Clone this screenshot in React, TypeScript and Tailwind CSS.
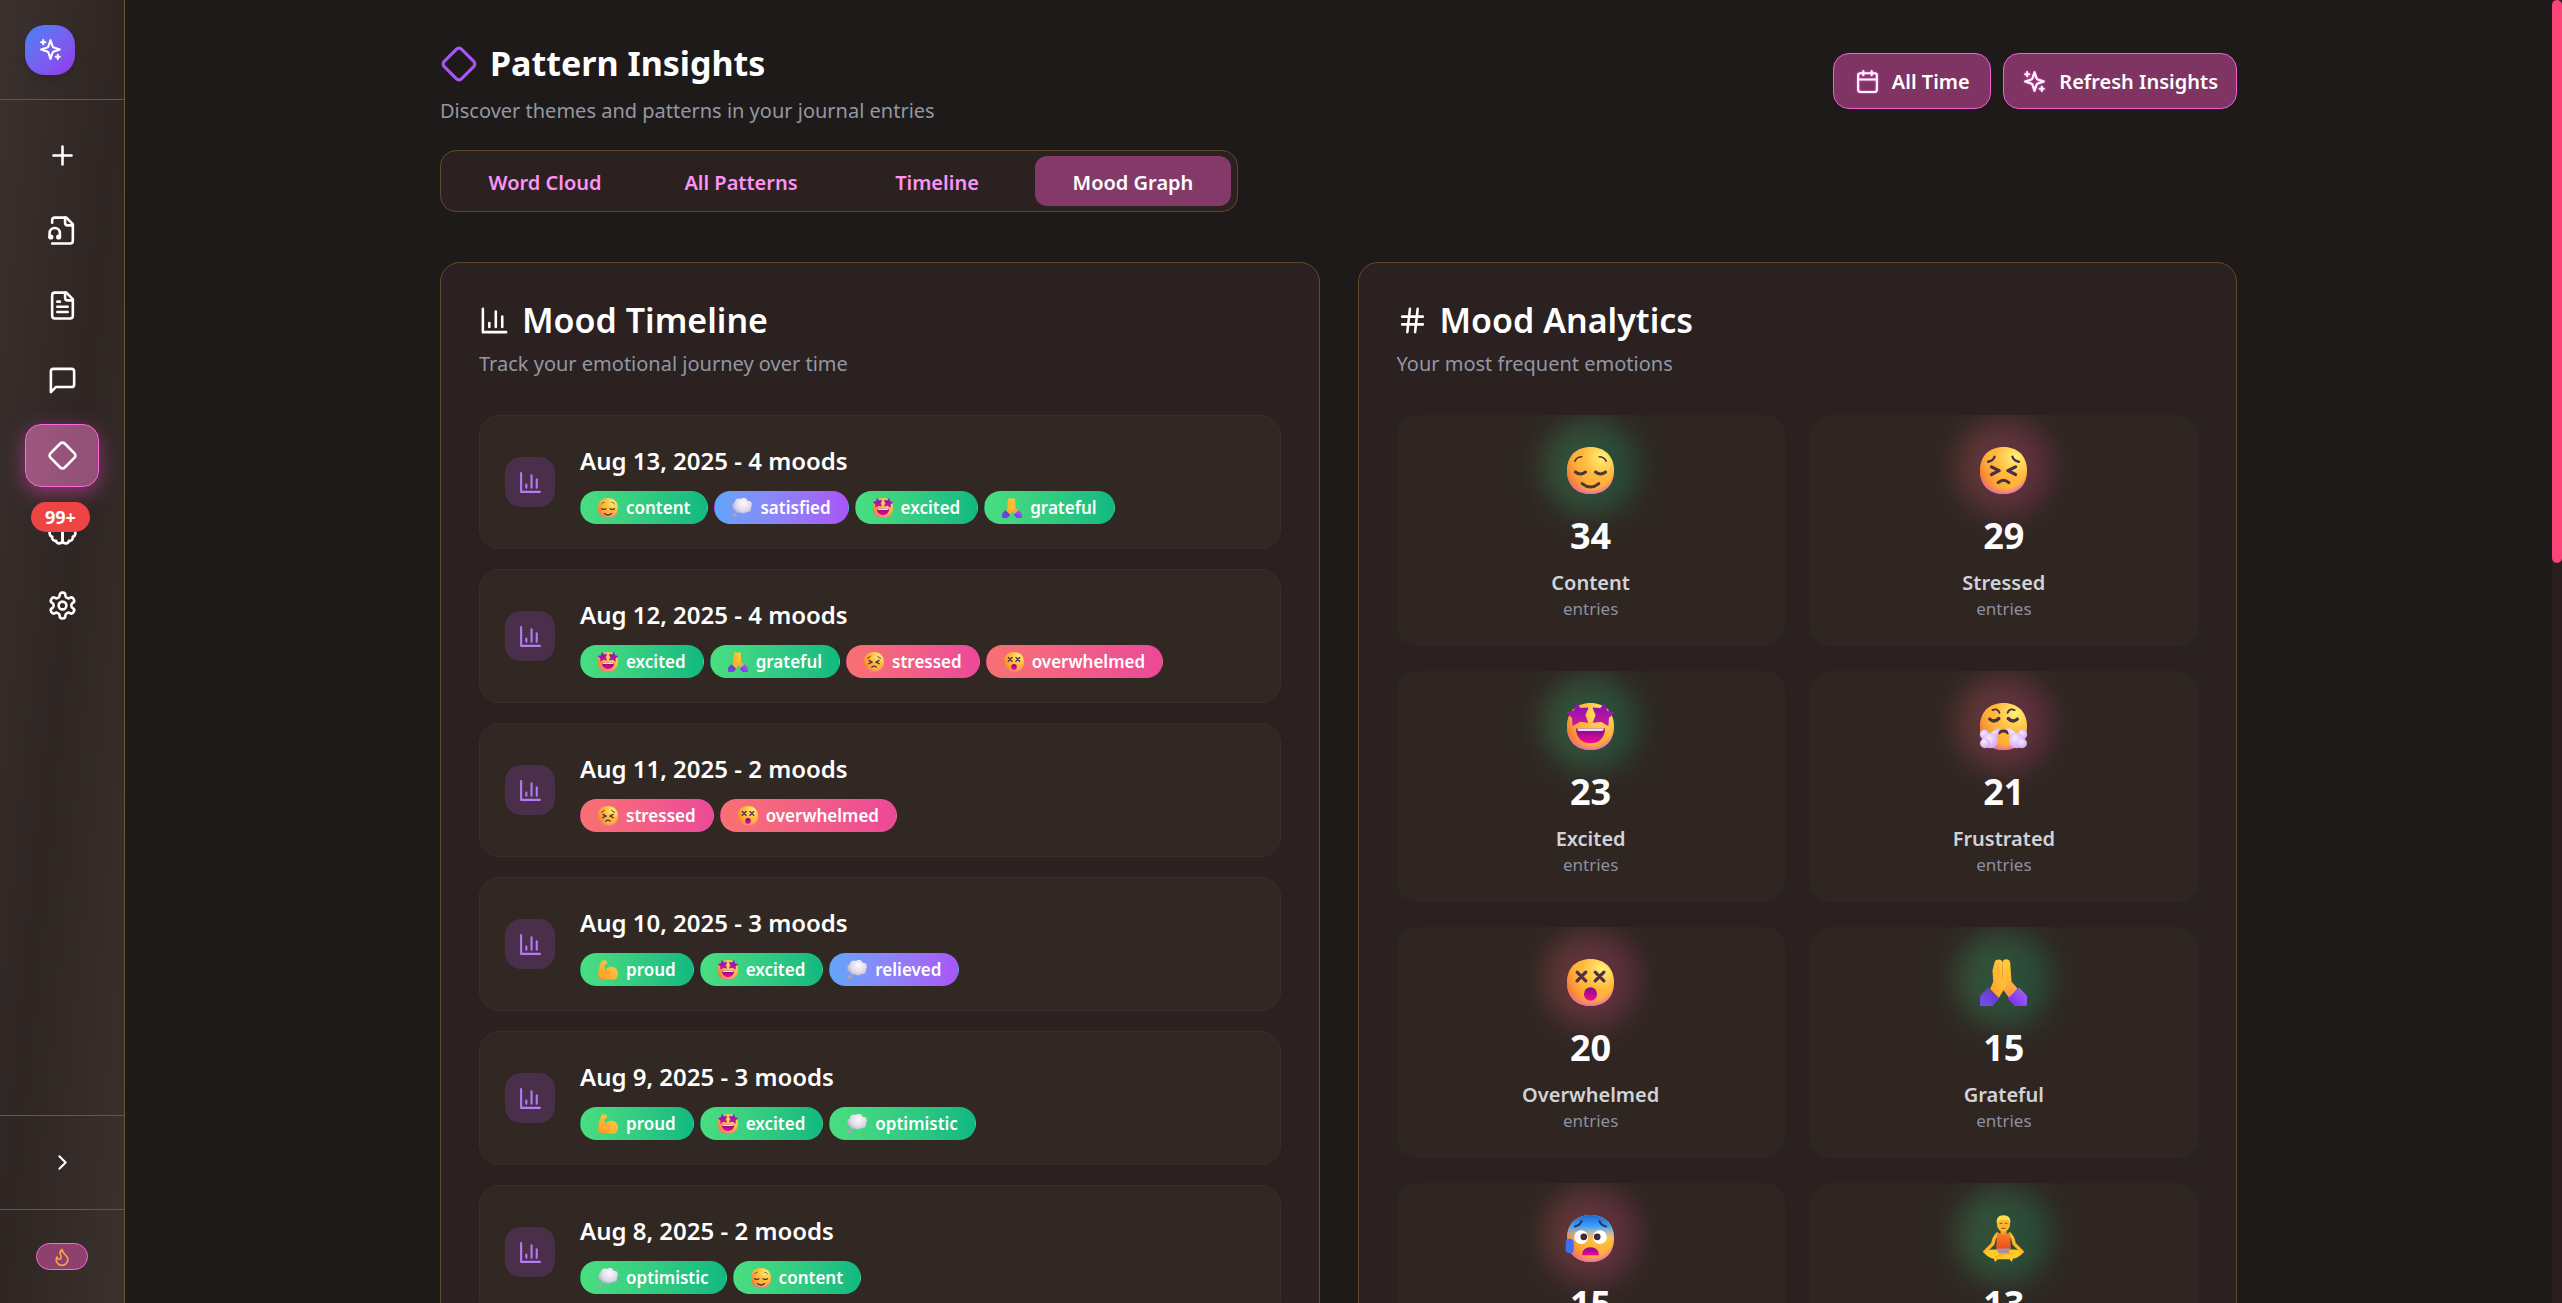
import type { ReactNode } from "react";

type EmojiName =
  | "relieved"
  | "persevering"
  | "starStruck"
  | "steam"
  | "dizzy"
  | "pray"
  | "anxious"
  | "lotus"
  | "biceps"
  | "thought";

type Tone = "green" | "blue" | "red";

const PILL_TONE: Record<Tone, string> = {
  green: "from-[#4ade80] to-[#10b981]",
  blue: "from-[#60a5fa] to-[#a855f7]",
  red: "from-[#f87171] to-[#ec4899]",
};

const MOODS: Record<string, { emoji: EmojiName; tone: Tone }> = {
  content: { emoji: "relieved", tone: "green" },
  satisfied: { emoji: "thought", tone: "blue" },
  excited: { emoji: "starStruck", tone: "green" },
  grateful: { emoji: "pray", tone: "green" },
  stressed: { emoji: "persevering", tone: "red" },
  overwhelmed: { emoji: "dizzy", tone: "red" },
  proud: { emoji: "biceps", tone: "green" },
  relieved: { emoji: "thought", tone: "blue" },
  optimistic: { emoji: "thought", tone: "green" },
};

const DAYS: { date: string; moods: string[] }[] = [
  { date: "Aug 13, 2025", moods: ["content", "satisfied", "excited", "grateful"] },
  { date: "Aug 12, 2025", moods: ["excited", "grateful", "stressed", "overwhelmed"] },
  { date: "Aug 11, 2025", moods: ["stressed", "overwhelmed"] },
  { date: "Aug 10, 2025", moods: ["proud", "excited", "relieved"] },
  { date: "Aug 9, 2025", moods: ["proud", "excited", "optimistic"] },
  { date: "Aug 8, 2025", moods: ["optimistic", "content"] },
];

const STATS: { label: string; count: number; emoji: EmojiName; tone: Tone }[] = [
  { label: "Content", count: 34, emoji: "relieved", tone: "green" },
  { label: "Stressed", count: 29, emoji: "persevering", tone: "red" },
  { label: "Excited", count: 23, emoji: "starStruck", tone: "green" },
  { label: "Frustrated", count: 21, emoji: "steam", tone: "red" },
  { label: "Overwhelmed", count: 20, emoji: "dizzy", tone: "red" },
  { label: "Grateful", count: 15, emoji: "pray", tone: "green" },
  { label: "Anxious", count: 15, emoji: "anxious", tone: "red" },
  { label: "Calm", count: 13, emoji: "lotus", tone: "green" },
];

/* ---------- line icons ---------- */

function Icon({ className, strokeWidth = 2, children }: { className: string; strokeWidth?: number; children: ReactNode }) {
  return (
    <svg
      viewBox="0 0 24 24"
      className={className}
      fill="none"
      stroke="currentColor"
      strokeWidth={strokeWidth}
      strokeLinecap="round"
      strokeLinejoin="round"
      aria-hidden="true"
    >
      {children}
    </svg>
  );
}

const sparkles = (
  <>
    <path d="m12 3-1.912 5.813a2 2 0 0 1-1.275 1.275L3 12l5.813 1.912a2 2 0 0 1 1.275 1.275L12 21l1.912-5.813a2 2 0 0 1 1.275-1.275L21 12l-5.813-1.912a2 2 0 0 1-1.275-1.275L12 3Z" />
    <path d="M5 3v4M19 17v4M3 5h4M17 19h4" />
  </>
);
const diamond = (
  <path d="M2.7 10.3a2.41 2.41 0 0 0 0 3.41l7.59 7.59a2.41 2.41 0 0 0 3.41 0l7.59-7.59a2.41 2.41 0 0 0 0-3.41l-7.59-7.59a2.41 2.41 0 0 0-3.41 0Z" />
);
const chart = <path d="M3 3v18h18M18 17V9M13 17V5M8 17v-3" />;
const hash = <path d="M4 9h16M4 15h16M10 3 8 21M16 3l-2 18" />;
const calendar = (
  <>
    <path d="M8 2v4M16 2v4M3 10h18" />
    <rect x="3" y="4" width="18" height="18" rx="2" />
  </>
);
const plus = <path d="M5 12h14M12 5v14" />;
const fileHeadphones = (
  <>
    <path d="M4 22h14a2 2 0 0 0 2-2V7l-5-5H6a2 2 0 0 0-2 2v2" />
    <path d="M14 2v4a2 2 0 0 0 2 2h4" />
    <path d="M2 17v-3a4 4 0 0 1 8 0v3" />
    <circle cx="9" cy="17" r="1" />
    <circle cx="3" cy="17" r="1" />
  </>
);
const fileText = (
  <>
    <path d="M15 2H6a2 2 0 0 0-2 2v16a2 2 0 0 0 2 2h12a2 2 0 0 0 2-2V7Z" />
    <path d="M14 2v4a2 2 0 0 0 2 2h4M10 9H8M16 13H8M16 17H8" />
  </>
);
const message = <path d="M21 15a2 2 0 0 1-2 2H7l-4 4V5a2 2 0 0 1 2-2h14a2 2 0 0 1 2 2z" />;
const brain = (
  <>
    <path d="M9.5 2A2.5 2.5 0 0 1 12 4.5v15a2.5 2.5 0 0 1-4.96.44 2.5 2.5 0 0 1-2.96-3.08 3 3 0 0 1-.34-5.58 2.5 2.5 0 0 1 1.32-4.24 2.5 2.5 0 0 1 1.98-3A2.5 2.5 0 0 1 9.5 2Z" />
    <path d="M14.5 2A2.5 2.5 0 0 0 12 4.5v15a2.5 2.5 0 0 0 4.96.44 2.5 2.5 0 0 0 2.96-3.08 3 3 0 0 0 .34-5.58 2.5 2.5 0 0 0-1.32-4.24 2.5 2.5 0 0 0-1.98-3A2.5 2.5 0 0 0 14.5 2Z" />
  </>
);
const settings = (
  <>
    <path d="M12.22 2h-.44a2 2 0 0 0-2 2v.18a2 2 0 0 1-1 1.73l-.43.25a2 2 0 0 1-2 0l-.15-.08a2 2 0 0 0-2.73.73l-.22.38a2 2 0 0 0 .73 2.73l.15.1a2 2 0 0 1 1 1.72v.51a2 2 0 0 1-1 1.74l-.15.09a2 2 0 0 0-.73 2.73l.22.38a2 2 0 0 0 2.73.73l.15-.08a2 2 0 0 1 2 0l.43.25a2 2 0 0 1 1 1.73V20a2 2 0 0 0 2 2h.44a2 2 0 0 0 2-2v-.18a2 2 0 0 1 1-1.73l.43-.25a2 2 0 0 1 2 0l.15.08a2 2 0 0 0 2.73-.73l.22-.39a2 2 0 0 0-.73-2.73l-.15-.08a2 2 0 0 1-1-1.74v-.5a2 2 0 0 1 1-1.74l.15-.09a2 2 0 0 0 .73-2.73l-.22-.38a2 2 0 0 0-2.73-.73l-.15.08a2 2 0 0 1-2 0l-.43-.25a2 2 0 0 1-1-1.73V4a2 2 0 0 0-2-2z" />
    <circle cx="12" cy="12" r="3" />
  </>
);
const chevron = <path d="m9 18 6-6-6-6" />;
const flame = (
  <path d="M8.5 14.5A2.5 2.5 0 0 0 11 12c0-1.38-.5-2-1-3-1.072-2.143-.224-4.054 2-6 .5 2.5 2 4.9 4 6.5 2 1.6 3 3.5 3 5.5a7 7 0 1 1-14 0c0-1.153.433-2.294 1-3a2.5 2.5 0 0 0 2.5 2.5z" />
);

/* ---------- emoji ---------- */

function EmojiPaints() {
  return (
    <svg className="absolute h-0 w-0" aria-hidden="true">
      <defs>
        <radialGradient id="skin" gradientUnits="userSpaceOnUse" cx="23" cy="8" r="24">
          <stop offset="0" stopColor="#fff176" />
          <stop offset=".5" stopColor="#ffb83c" />
          <stop offset="1" stopColor="#ffab30" />
        </radialGradient>
        <linearGradient id="skinLeft" gradientUnits="userSpaceOnUse" x1="2" y1="22" x2="12" y2="17">
          <stop offset="0" stopColor="#f0653c" stopOpacity=".9" />
          <stop offset="1" stopColor="#f59639" stopOpacity="0" />
        </linearGradient>
        <radialGradient id="skinBase" gradientUnits="userSpaceOnUse" cx="16" cy="12" r="18">
          <stop offset=".82" stopColor="#f06fb4" stopOpacity="0" />
          <stop offset="1" stopColor="#e864c4" stopOpacity=".9" />
        </radialGradient>
        <linearGradient id="star" x1="0" y1="0" x2="0" y2="1">
          <stop offset="0" stopColor="#8510b4" />
          <stop offset="1" stopColor="#cc1a9c" />
        </linearGradient>
        <linearGradient id="mouth" x1="0" y1="0" x2="0" y2="1">
          <stop offset="0" stopColor="#820c8c" />
          <stop offset="1" stopColor="#f4079b" />
        </linearGradient>
        <linearGradient id="chill" gradientUnits="userSpaceOnUse" x1="0" y1="2" x2="0" y2="17">
          <stop offset="0" stopColor="#1f68cf" />
          <stop offset=".45" stopColor="#3ba2ff" />
          <stop offset="1" stopColor="#c9a8d8" stopOpacity="0" />
        </linearGradient>
        <radialGradient id="puff" cx=".4" cy=".35" r=".75">
          <stop offset="0" stopColor="#f4eaff" />
          <stop offset="1" stopColor="#cf9ef2" />
        </radialGradient>
        <radialGradient id="cloud" gradientUnits="userSpaceOnUse" cx="18" cy="9" r="18">
          <stop offset="0" stopColor="#fbfafd" />
          <stop offset=".6" stopColor="#dedae8" />
          <stop offset="1" stopColor="#aaa2bd" />
        </radialGradient>
        <linearGradient id="hand" x1="0" y1="1" x2="1" y2="0">
          <stop offset="0" stopColor="#ff9a1f" />
          <stop offset="1" stopColor="#ffd24a" />
        </linearGradient>
        <linearGradient id="hand2" x1="0" y1="1" x2="0" y2="0">
          <stop offset="0" stopColor="#ff8a5c" />
          <stop offset=".4" stopColor="#ffb52e" />
          <stop offset="1" stopColor="#ffcb3a" />
        </linearGradient>
        <linearGradient id="sleeve" x1="0" y1="1" x2="1" y2="0">
          <stop offset="0" stopColor="#6f52f0" />
          <stop offset="1" stopColor="#6b2fc0" />
        </linearGradient>
        <linearGradient id="sleeve2" x1="0" y1="1" x2="1" y2="0">
          <stop offset="0" stopColor="#7a22f0" />
          <stop offset="1" stopColor="#a56cf5" />
        </linearGradient>
        <linearGradient id="shirt" x1="0" y1="0" x2="0" y2="1">
          <stop offset="0" stopColor="#ff7f2a" />
          <stop offset="1" stopColor="#e94e1b" />
        </linearGradient>
      </defs>
    </svg>
  );
}

const FACE = "M16 2C24.6 2 30 7.4 30 16S24.6 30 16 30 2 24.6 2 16 7.4 2 16 2Z";

function Face() {
  return (
    <>
      <path d={FACE} fill="url(#skin)" />
      <path d={FACE} fill="url(#skinLeft)" />
      <path d={FACE} fill="url(#skinBase)" />
    </>
  );
}

const EMOJI: Record<EmojiName, ReactNode> = {
  relieved: (
    <>
      <Face />
      <g fill="none" stroke="#4a3538" strokeLinecap="round">
        <path d="M6.7 10.4Q7.8 7.8 10.8 7.8M25.3 10.4Q24.2 7.8 21.2 7.8" strokeWidth="1" />
        <path d="M7 16.9Q10 19.2 13 16.9M19 16.9Q22 19.2 25 16.9" strokeWidth="1.8" />
        <path d="M11 23.8Q16 27.8 21 23.8" strokeWidth="1.8" />
      </g>
    </>
  ),
  persevering: (
    <>
      <Face />
      <g fill="none" stroke="#4a2f45" strokeLinecap="round" strokeLinejoin="round">
        <path d="M10.7 7.8Q9.8 10.4 6.8 10.8M21.3 7.8Q22.2 10.4 25.2 10.8" strokeWidth="1.4" />
        <path d="M8.8 13.8 13.4 16.1 8.8 18.4M23.2 13.8 18.6 16.1 23.2 18.4" strokeWidth="1.9" />
        <path d="M12.8 23.2Q16 20.4 19.2 23.2" strokeWidth="1.8" />
      </g>
    </>
  ),
  starStruck: (
    <>
      <Face />
      <path
        d="M7.6 2.6 10 5.4 14.4 5 12.6 9.2 14.2 13.4 9.6 12.8 5.6 15.2 5.4 10.9 2.4 8 6.4 6.6ZM24.4 2.6 22 5.4 17.6 5 19.4 9.2 17.8 13.4 22.4 12.8 26.4 15.2 26.6 10.9 29.6 8 25.6 6.6Z"
        fill="url(#star)"
        stroke="url(#star)"
        strokeWidth=".7"
        strokeLinejoin="round"
      />
      <path d="M7.4 17.2h17.2c0 5.2-3.2 8.8-8.6 8.8s-8.6-3.6-8.6-8.8z" fill="url(#mouth)" />
      <path d="M8.2 17.2h15.6v.5q0 1-1 1H9.2q-1 0-1-1z" fill="#eadcf6" />
    </>
  ),
  steam: (
    <>
      <Face />
      <g fill="none" stroke="#4a3038" strokeLinecap="round">
        <path d="M9.4 6.2Q12.6 4.9 13.6 7.9M22.6 6.2Q19.4 4.9 18.4 7.9" strokeWidth="1.1" />
        <path d="M7.8 11.6Q10.4 14 13.2 11.2M24.2 11.6Q21.6 14 18.8 11.2" strokeWidth="2" />
        <path d="M13.4 19.8Q16 17.6 18.6 19.8" strokeWidth="1.8" />
      </g>
      <g fill="url(#puff)">
        <path d="M13.6 16.2 14.1 17.4 11.6 23.4 6.6 21.2Z" />
        <path d="M18.4 16.2 17.9 17.4 20.4 23.4 25.4 21.2Z" />
        <circle cx="4.7" cy="20.8" r="2.8" />
        <circle cx="27.3" cy="20.8" r="2.8" />
        <circle cx="8.2" cy="24.4" r="4.6" />
        <circle cx="23.8" cy="24.4" r="4.6" />
        <circle cx="5" cy="26" r="3" />
        <circle cx="27" cy="26" r="3" />
      </g>
    </>
  ),
  dizzy: (
    <>
      <Face />
      <path
        d="M8 9.8 13.2 15M13.2 9.8 8 15M18.8 9.8 24 15M24 9.8 18.8 15"
        fill="none"
        stroke="#4d2f4e"
        strokeWidth="1.9"
        strokeLinecap="round"
      />
      <ellipse cx="16" cy="22.9" rx="3.9" ry="4" fill="url(#mouth)" />
    </>
  ),
  pray: (
    <>
      <path d="M15.4 4Q15.6 2.2 17.6 2.2T20 4.2L20.8 15.6 24.4 19.6 19.4 25.2 16 20.6Z" fill="url(#hand2)" />
      <path d="M10.6 4.2Q10.8 2.4 12.6 2.4 15 2 15.6 4.4L17.6 5.2V18L13.2 25.2 8 19.8 9.9 15.6 9.4 9Z" fill="url(#hand)" />
      <path d="M12.8 4v8M15.4 4.6v9" stroke="#f09a28" strokeWidth=".5" fill="none" />
      <path d="M6.6 19.2 13.4 25.6 9.4 30H2v-6Z" fill="url(#sleeve)" />
      <path d="M25.4 19.2 18.6 25.6 22.6 30H30v-6Z" fill="url(#sleeve2)" />
    </>
  ),
  anxious: (
    <>
      <Face />
      <path d={FACE} fill="url(#chill)" />
      <path
        d="M10.6 5.6Q9.8 8.2 6.8 8.8M21.4 5.6Q22.2 8.2 25.2 8.8"
        fill="none"
        stroke="#2f3557"
        strokeWidth="1.3"
        strokeLinecap="round"
      />
      <circle cx="10.4" cy="15.2" r="4.1" fill="#fff" />
      <circle cx="21.6" cy="15.2" r="4.1" fill="#fff" />
      <circle cx="12" cy="15" r="2" fill="#43283c" />
      <circle cx="20" cy="15" r="2" fill="#43283c" />
      <path d="M11 26c0-3.200 2-4.800 5-4.800s5 1.600 5 4.800z" fill="url(#mouth)" />
      <rect x="1.200" y="16.200" width="4.800" height="8.600" rx="2.400" fill="#3f6ef6" />
    </>
  ),
  lotus: (
    <>
      <path d="M3.600 23.600 9 22.600H23L28.400 23.600Q25.500 27.600 21.600 28L21 30 19.500 28.400H12.500L11 30 10.200 28Q6.500 27.600 3.600 23.600Z" fill="#ffc928" />
      <path d="M12.200 13.400Q10.200 15.500 9.600 19.200L5 23.800M19.800 13.400Q21.800 15.500 22.400 19.200L27 23.800" fill="none" stroke="#fdb62c" strokeWidth="2" strokeLinecap="round" />
      <rect x="14.200" y="10" width="3.600" height="4" fill="#f2a024" />
      <path d="M12.200 12.200Q16 15 19.800 12.200L20.400 22.600H11.600Z" fill="url(#shirt)" />
      <path d="M11.800 22h8.400l-1.400 3h-5.600z" fill="#a394a6" />
      <path d="M11 27.400Q16 24.400 21 25.200" stroke="#f7a91d" strokeWidth=".7" fill="none" />
      <ellipse cx="16" cy="7.300" rx="3.900" ry="4.800" fill="#fdb92e" />
      <path d="M12 7Q11.400 2.200 16 2.200T20 7L18.600 4.800 13.600 5Z" fill="#ffe04a" />
      <path d="M14 7h1M17 7h1M15 10h2" stroke="#a2582a" strokeWidth=".7" strokeLinecap="round" />
    </>
  ),
  biceps: (
    <>
      <path
        d="M6.500 4.500Q8 2 11.500 2.400L14 3.600Q15.400 6 13.400 8.200L11.200 9Q10.600 13 12.600 16.500 15 11.400 20.600 11.600 29 12.400 30 20.500 30 28.500 24 29.600 14 30.800 6 29.200 1.600 28 2.200 21.500 2.800 11.500 6.500 4.500Z"
        fill="url(#hand)"
      />
      <path d="M12.600 16.500Q13.600 19.500 17 20" stroke="#f08a2c" strokeWidth="1.200" fill="none" strokeLinecap="round" />
      <path d="M3 25Q8 30 24 29.600 14 30.800 6 29.200 3 28 3 25Z" fill="#f5814d" />
    </>
  ),
  thought: (
    <g fill="url(#cloud)">
      <circle cx="8" cy="13.500" r="5.600" />
      <circle cx="11.500" cy="8" r="5.400" />
      <circle cx="18.500" cy="7" r="5.200" />
      <circle cx="24.600" cy="11" r="5.200" />
      <circle cx="24" cy="17" r="4.800" />
      <circle cx="17.500" cy="18.500" r="5.200" />
      <circle cx="11" cy="18" r="4.600" />
      <circle cx="16" cy="13" r="6.500" />
      <circle cx="5.500" cy="26" r="2.800" />
    </g>
  ),
};

function Emoji({ name, className }: { name: EmojiName; className: string }) {
  return (
    <svg viewBox="2 2 28 28" className={className} aria-hidden="true">
      {EMOJI[name]}
    </svg>
  );
}

/* ---------- sidebar ---------- */

function NavButton({ label, children, badge }: { label: string; children: ReactNode; badge?: string }) {
  return (
    <button type="button" aria-label={label} className="relative flex h-[63px] items-center justify-center rounded-2xl">
      <Icon className="size-[31px]">{children}</Icon>
      {badge && (
        <span className="absolute top-[3px] left-1.5 rounded-full bg-[#ef4444] px-3.5 text-[18px] leading-[30px] font-bold">
          {badge}
        </span>
      )}
    </button>
  );
}

function Sidebar() {
  return (
    <aside className="flex w-[125px] shrink-0 flex-col border-r border-[#6f5733] bg-linear-to-br from-[#3b3230] via-[#2f2624] to-[#3b322e] text-white">
      <div className="flex h-[100px] items-center border-b border-[#6f5733] pl-[25px]">
        <div className="flex size-[50px] items-center justify-center rounded-[20px] bg-linear-to-br from-[#3b82f6] to-[#9333ea] shadow-lg">
          <Icon className="size-[25px]">{sparkles}</Icon>
        </div>
      </div>
      <nav className="flex grow flex-col gap-3 px-[25px] pt-6">
        <NavButton label="New entry">{plus}</NavButton>
        <NavButton label="Voice notes">{fileHeadphones}</NavButton>
        <NavButton label="Entries">{fileText}</NavButton>
        <NavButton label="Chat">{message}</NavButton>
        <button
          type="button"
          aria-label="Pattern insights"
          aria-current="page"
          className="flex h-[63px] items-center justify-center rounded-2xl border border-[#ff66e0] bg-linear-to-r from-[#9c5780] to-[#925075] shadow-[0_6px_20px_rgba(236,72,190,0.5)]"
        >
          <Icon className="size-[31px]">{diamond}</Icon>
        </button>
        <NavButton label="Memory" badge="99+">
          {brain}
        </NavButton>
        <NavButton label="Settings">{settings}</NavButton>
      </nav>
      <div className="flex h-[94px] items-center justify-center border-t border-[#6f5733]">
        <button type="button" aria-label="Expand sidebar">
          <Icon className="size-[25px]">{chevron}</Icon>
        </button>
      </div>
      <div className="flex h-[94px] items-center justify-center border-t border-[#6f5733]">
        <button
          type="button"
          aria-label="Streak"
          className="flex h-[27px] w-[52px] items-center justify-center rounded-full border border-[#ff66d8] bg-[#8e416d] text-[#f3a24b]"
        >
          <Icon className="size-5">{flame}</Icon>
        </button>
      </div>
    </aside>
  );
}

/* ---------- content ---------- */

function ActionButton({ icon, children }: { icon: ReactNode; children: ReactNode }) {
  return (
    <button
      type="button"
      className="flex h-14 min-w-[158px] items-center justify-center gap-3 rounded-2xl border border-[#f060d4] bg-[#7f3463] px-[18px] text-[20px] font-semibold text-white"
    >
      <Icon className="size-[25px] drop-shadow-[0_0_1px_#ff4fe0]">{icon}</Icon>
      <span className="pt-0.5">{children}</span>
    </button>
  );
}

function Panel({ icon, title, subtitle, children }: { icon: ReactNode; title: string; subtitle: string; children: ReactNode }) {
  return (
    <section className="rounded-[20px] border border-[#604a2c] bg-[#2a2120] p-[38px]">
      <h2 className="flex items-center gap-3 text-[34px] leading-[38px] font-semibold text-white">
        <Icon className="size-[31px]">{icon}</Icon>
        {title}
      </h2>
      <p className="mt-2.5 mb-9 text-[20px] leading-[30px] text-[#9298a3]">{subtitle}</p>
      {children}
    </section>
  );
}

function DayRow({ date, moods }: { date: string; moods: string[] }) {
  return (
    <li className="flex items-center gap-[25px] rounded-[20px] border border-[#3a2e29] bg-[#312824] px-[25px] py-6">
      <div className="flex size-[50px] shrink-0 items-center justify-center rounded-2xl bg-[#4a2f4b] text-[#b67bf3]">
        <Icon className="size-[25px]">{chart}</Icon>
      </div>
      <div>
        <h3 className="mb-2.5 text-[24px] leading-[41px] font-semibold text-white">
          {date} - {moods.length} moods
        </h3>
        <ul className="flex flex-wrap gap-1.5">
          {moods.map((m) => (
            <li
              key={m}
              className={`flex h-[33px] items-center gap-2 rounded-full border border-transparent bg-linear-to-r px-[17px] text-[17px] font-semibold text-white ${PILL_TONE[MOODS[m].tone]}`}
            >
              <Emoji name={MOODS[m].emoji} className="size-5" />
              {m}
            </li>
          ))}
        </ul>
      </div>
    </li>
  );
}

function StatTile({ label, count, emoji, tone }: { label: string; count: number; emoji: EmojiName; tone: Tone }) {
  return (
    <li className="flex flex-col items-center overflow-hidden rounded-[20px] bg-[#2f2622] pt-8 pb-6 text-center">
      <div className="relative flex items-center justify-center">
        <div className={`absolute -top-7 size-24 rounded-full bg-linear-to-r opacity-25 blur-[14px] ${PILL_TONE[tone]}`} />
        <Emoji name={emoji} className="relative size-[47px] overflow-visible" />
      </div>
      <div className="mt-[18px] text-[36px] leading-[48px] font-bold text-white">{count}</div>
      <div className="mt-2.5 text-[20px] leading-[26px] font-semibold text-[#d1d3d9]">{label}</div>
      <div className="text-[17px] leading-[26px] text-[#8b90a0]">entries</div>
    </li>
  );
}

const TABS = ["Word Cloud", "All Patterns", "Timeline", "Mood Graph"];

export default function App() {
  return (
    <div className="flex h-screen overflow-hidden bg-[#1e1a19] font-['Noto_Sans',sans-serif]">
      <EmojiPaints />
      <Sidebar />
      <main className="min-w-0 grow overflow-hidden">
        <div className="mx-auto max-w-[1797px] pt-[41px]">
          <header className="flex items-start justify-between">
            <div>
              <h1 className="flex items-center gap-3 text-[34px] leading-[45px] font-bold text-white">
                <Icon className="size-[38px] text-[#a855f7]">{diamond}</Icon>
                Pattern Insights
              </h1>
              <p className="mt-2.5 text-[20px] leading-[30px] text-[#9298a3]">
                Discover themes and patterns in your journal entries
              </p>
            </div>
            <div className="mt-3 flex gap-3">
              <ActionButton icon={calendar}>All Time</ActionButton>
              <ActionButton icon={sparkles}>Refresh Insights</ActionButton>
            </div>
          </header>

          <div
            role="tablist"
            className="mt-6 grid w-fit grid-cols-4 rounded-2xl border border-[#604a2c] bg-[#2a2120] px-1.5 py-[5px]"
          >
            {TABS.map((t) => (
              <button
                key={t}
                type="button"
                role="tab"
                aria-selected={t === "Mood Graph"}
                className={`h-[50px] w-[196px] rounded-xl pt-1 text-[20px] font-semibold ${
                  t === "Mood Graph" ? "bg-[#843a68] text-white" : "text-[#ff92f7]"
                }`}
              >
                {t}
              </button>
            ))}
          </div>

          <div className="mt-[50px] grid grid-cols-2 gap-[38px]">
            <Panel icon={chart} title="Mood Timeline" subtitle="Track your emotional journey over time">
              <ul className="flex flex-col gap-5">
                {DAYS.map((d) => (
                  <DayRow key={d.date} {...d} />
                ))}
              </ul>
            </Panel>
            <Panel icon={hash} title="Mood Analytics" subtitle="Your most frequent emotions">
              <ul className="grid grid-cols-2 gap-[25px]">
                {STATS.map((s) => (
                  <StatTile key={s.label} {...s} />
                ))}
              </ul>
            </Panel>
          </div>
        </div>
      </main>
      <div className="w-[10px] shrink-0 bg-[#2c1d20]" aria-hidden="true">
        <div className="h-[563px] rounded-[5px] bg-[#fb4478]" />
      </div>
    </div>
  );
}
